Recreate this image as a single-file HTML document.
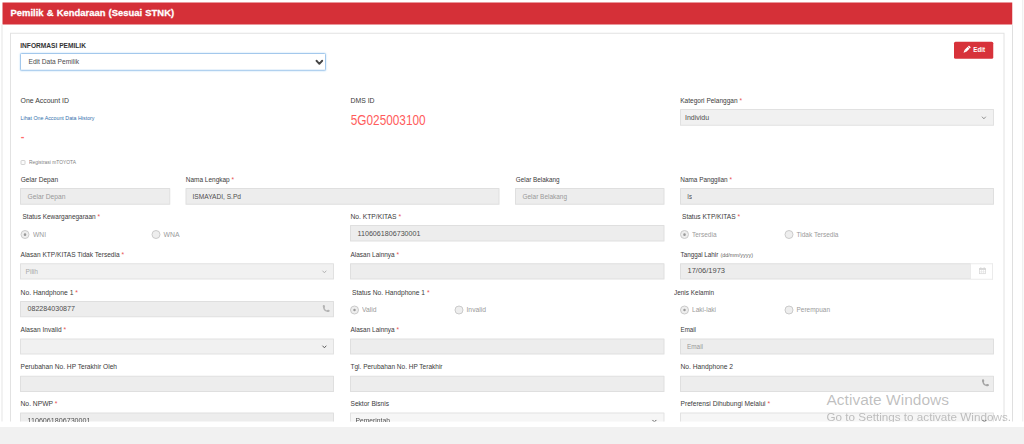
<!DOCTYPE html>
<html lang="id"><head><meta charset="utf-8"><title>Pemilik &amp; Kendaraan (Sesuai STNK)</title>
<style>
*{box-sizing:border-box;margin:0;padding:0}
html,body{width:1024px;height:444px;overflow:hidden;background:#fff}
body{position:relative;font-family:"Liberation Sans",sans-serif}
.root{position:absolute;left:0;top:0;width:4096px;height:1776px;transform:scale(0.25);transform-origin:0 0}

.clip{position:absolute;left:0;top:0;width:4096px;height:1686.4px;overflow:hidden;background:#fff}
.foot{position:absolute;left:0;top:1708px;width:4096px;height:68px;background:#f1f1f1}
.hdr{position:absolute;left:9.6px;top:9.6px;width:4039.2px;height:88.8px;background:#d53038}
.panel{position:absolute;left:5.6px;top:98.4px;width:4046.4px;height:1680px;border-left:4px solid #e6e6e6;border-right:4px solid #dfdfdf}
.card{position:absolute;left:40px;top:131.2px;width:3977.6px;height:1680px;border:4px solid #e2e2e2}
.vline{position:absolute;left:4088.8px;top:0;width:4px;height:1688px;background:#ececec}
.t{position:absolute;white-space:nowrap;transform-origin:0 50%;line-height:1}
.st{color:#e85050}
.in{position:absolute;height:67.2px;background:#ededed;border:4px solid #dfdfdf;border-radius:2px}
.in.lt{background:#f6f6f6;border-color:#e2e2e2}
.in.sl{background:#f1f1f1;border-color:#e1e1e1}
.sel{position:absolute;left:80px;top:212.4px;width:1224.4px;height:70.4px;background:#fff;border:4px solid #a3c8ec;border-radius:6px;box-shadow:0 0 6px rgba(102,175,233,.7)}
.addon{position:absolute;left:3883.2px;top:1052.8px;width:89.2px;height:66.4px;background:#fff;border:4px solid #ebebeb;border-left:0}
.btn{position:absolute;left:3816px;top:166.8px;width:156.8px;height:68.4px;background:#d7323a;border-radius:6px}
.rad{position:absolute;width:36px;height:36px;border-radius:50%;border:4px solid #cbcbcb;background:#eeeeee}
.rad.on::after{content:"";position:absolute;left:8.8px;top:8.8px;width:10.4px;height:10.4px;border-radius:50%;background:#9a9a9a}
.cb{position:absolute;left:81.6px;top:640.4px;width:20.4px;height:19.6px;border:4px solid #d2d2d2;border-radius:4px;background:#fbfbfb}
svg{position:absolute;overflow:visible}
</style></head><body><div class="root">
<div class="clip">
<div class="hdr"></div>
<div class="panel"></div>
<div class="card"></div>
<div class="vline"></div>

<div class="in sl" style="left:2720px;top:436.4px;width:1256px;height:66.4px"></div>
<div class="in " style="left:80px;top:752px;width:600.8px;height:66.8px"></div>
<div class="in " style="left:741.6px;top:752px;width:1256px;height:66.8px"></div>
<div class="in " style="left:2060px;top:752px;width:598.4px;height:66.8px"></div>
<div class="in " style="left:2720px;top:752px;width:1256px;height:66.8px"></div>
<div class="in " style="left:1400px;top:900px;width:1258.4px;height:66.4px"></div>
<div class="in sl" style="left:80px;top:1052.8px;width:1256px;height:65.2px"></div>
<div class="in " style="left:1400px;top:1052.8px;width:1258.4px;height:65.2px"></div>
<div class="in " style="left:2720px;top:1052.8px;width:1164.8px;height:65.2px"></div>
<div class="addon"></div>
<div class="in " style="left:80px;top:1204px;width:1256px;height:64.8px"></div>
<div class="in sl" style="left:80px;top:1353.6px;width:1256px;height:64.8px"></div>
<div class="in " style="left:1400px;top:1353.6px;width:1258.4px;height:64.8px"></div>
<div class="in " style="left:2720px;top:1353.6px;width:1256px;height:64.8px"></div>
<div class="in " style="left:80px;top:1503.2px;width:1256px;height:64.4px"></div>
<div class="in " style="left:1400px;top:1503.2px;width:1258.4px;height:64.4px"></div>
<div class="in " style="left:2720px;top:1503.2px;width:1256px;height:64.4px"></div>
<div class="in " style="left:80px;top:1649.6px;width:1256px;height:65.6px"></div>
<div class="in lt" style="left:1400px;top:1649.6px;width:1258.4px;height:65.6px"></div>
<div class="in lt" style="left:2720px;top:1649.6px;width:1256px;height:65.6px"></div>
<div class="sel"></div>
<div class="btn"></div>
<div class="cb"></div>
<div class="rad on" style="left:82px;top:920.4px"></div>
<div class="rad" style="left:606px;top:920.4px"></div>
<div class="rad on" style="left:2720px;top:920.4px"></div>
<div class="rad" style="left:3138px;top:920.4px"></div>
<div class="rad on" style="left:1400px;top:1222px"></div>
<div class="rad" style="left:1818px;top:1222px"></div>
<div class="rad on" style="left:2720px;top:1222px"></div>
<div class="rad" style="left:3138px;top:1222px"></div>
<svg style="left:1265.8px;top:243px;width:22.8px;height:12.4px" viewBox="0 0 5.7 3.1"><path d="M0 0 L2.85 3.1 L5.7 0" fill="none" stroke="#454545" stroke-width="1.85" stroke-linecap="round" stroke-linejoin="round"/></svg>
<svg style="left:3929px;top:467.6px;width:13.2px;height:7.2px" viewBox="0 0 3.3 1.8"><path d="M0 0 L1.65 1.8 L3.3 0" fill="none" stroke="#8a8a8a" stroke-width="0.95" stroke-linecap="round" stroke-linejoin="round"/></svg>
<svg style="left:1291.4px;top:1084.4px;width:13.2px;height:7.2px" viewBox="0 0 3.3 1.8"><path d="M0 0 L1.65 1.8 L3.3 0" fill="none" stroke="#b0b0b0" stroke-width="0.95" stroke-linecap="round" stroke-linejoin="round"/></svg>
<svg style="left:1291.4px;top:1384.4px;width:13.2px;height:7.2px" viewBox="0 0 3.3 1.8"><path d="M0 0 L1.65 1.8 L3.3 0" fill="none" stroke="#555" stroke-width="0.95" stroke-linecap="round" stroke-linejoin="round"/></svg>
<svg style="left:2611.4px;top:1681.2px;width:13.2px;height:7.2px" viewBox="0 0 3.3 1.8"><path d="M0 0 L1.65 1.8 L3.3 0" fill="none" stroke="#555" stroke-width="0.95" stroke-linecap="round" stroke-linejoin="round"/></svg>
<svg style="left:3931px;top:1681.2px;width:13.2px;height:7.2px" viewBox="0 0 3.3 1.8"><path d="M0 0 L1.65 1.8 L3.3 0" fill="none" stroke="#555" stroke-width="0.95" stroke-linecap="round" stroke-linejoin="round"/></svg>
<svg style="left:1287.4px;top:1217.8px;width:34px;height:34px" viewBox="0 0 8 8"><path d="M1.9 1.7 Q1.7 6.3 6.3 6.1" fill="none" stroke="#b4b4b4" stroke-width="1.35" stroke-linecap="round"/><ellipse cx="2" cy="1.9" rx="1.05" ry="1.35" fill="#b4b4b4" transform="rotate(-12 2 1.9)"/><ellipse cx="6.1" cy="6" rx="1.35" ry="1.05" fill="#b4b4b4" transform="rotate(-12 6.1 6)"/></svg>
<svg style="left:3924.2px;top:1515.4px;width:34px;height:34px" viewBox="0 0 8 8"><path d="M1.9 1.7 Q1.7 6.3 6.3 6.1" fill="none" stroke="#a4a4a4" stroke-width="1.35" stroke-linecap="round"/><ellipse cx="2" cy="1.9" rx="1.05" ry="1.35" fill="#a4a4a4" transform="rotate(-12 2 1.9)"/><ellipse cx="6.1" cy="6" rx="1.35" ry="1.05" fill="#a4a4a4" transform="rotate(-12 6.1 6)"/></svg>
<svg style="left:3915.6px;top:1069.2px;width:28px;height:27.2px" viewBox="0 0 7 6.8"><g fill="#d5d5d5"><rect x="0" y="1.1" width="7" height="1.5"/><rect x="1.3" y="0" width="1.1" height="1.8" rx=".4"/><rect x="4.6" y="0" width="1.1" height="1.8" rx=".4"/></g><rect x=".35" y="1.45" width="6.3" height="5" fill="none" stroke="#d5d5d5" stroke-width=".7"/><path d="M.4 4.5H6.6M2.5 2.6V6.4M4.5 2.6V6.4" fill="none" stroke="#dcdcdc" stroke-width=".5"/></svg>
<svg style="left:3849.2px;top:181px;width:35.2px;height:35.2px" viewBox="-4 -4 8 8"><g transform="rotate(45)" fill="#fff"><rect x="-1.2" y="-4.1" width="2.4" height="1.3" rx="0.35"/><rect x="-1.2" y="-2.5" width="2.4" height="4.1"/><path d="M-1.2 1.6 L1.2 1.6 L0 4 Z"/></g></svg>
<div class="t" id="t0" style="left:42.4px;top:32px;font-size:38.4px;height:38.4px;color:#fff;font-weight:700;-webkit-text-stroke:1.12px #fff;word-spacing:2.4px;transform:scaleX(0.9815)">Pemilik &amp; Kendaraan (Sesuai STNK)</div>
<div class="t" id="t1" style="left:81.2px;top:168.4px;font-size:28px;height:28px;color:#333;font-weight:700;transform:scaleX(0.9438)">INFORMASI PEMILIK</div>
<div class="t" id="t2" style="left:114px;top:234px;font-size:28px;height:28px;color:#4d4d4d;font-weight:400;transform:scaleX(0.9475)">Edit Data Pemilik</div>
<div class="t" id="t3" style="left:82px;top:388px;font-size:28px;height:28px;color:#3a3a3a;font-weight:400;transform:scaleX(0.9892)">One Account ID</div>
<div class="t" id="t4" style="left:82px;top:462px;font-size:21.6px;height:21.6px;color:#346fac;font-weight:400;transform:scaleX(0.9825)">Lihat One Account Data History</div>
<div class="t" id="t5" style="left:83.2px;top:524.8px;font-size:40px;height:40px;color:#ff6a6a;font-weight:700;transform:scaleX(1.0804)">-</div>
<div class="t" id="t6" style="left:116px;top:637.4px;font-size:20.4px;height:20.4px;color:#808080;font-weight:400;transform:scaleX(0.9628)">Registrasi mTOYOTA</div>
<div class="t" id="t7" style="left:1402px;top:388px;font-size:28px;height:28px;color:#3a3a3a;font-weight:400;transform:scaleX(0.9796)">DMS ID</div>
<div class="t" id="t8" style="left:1402.8px;top:452px;font-size:56px;height:56px;color:#ff5c5c;font-weight:400;transform:scaleX(0.8439)">5G025003100</div>
<div class="t" id="t9" style="left:2721.2px;top:388px;font-size:28px;height:28px;color:#3a3a3a;font-weight:400;transform:scaleX(0.9325)">Kategori Pelanggan<span class="st"> *</span></div>
<div class="t" id="t10" style="left:2740px;top:457.2px;font-size:28px;height:28px;color:#4d4d4d;font-weight:400;transform:scaleX(0.9947)">Individu</div>
<div class="t" id="t11" style="left:3893.2px;top:184px;font-size:29.6px;height:29.6px;color:#fff;font-weight:700;transform:scaleX(0.8371)">Edit</div>
<div class="t" id="t12" style="left:82.8px;top:706px;font-size:28px;height:28px;color:#3a3a3a;font-weight:400;transform:scaleX(0.9398)">Gelar Depan</div>
<div class="t" id="t13" style="left:742.8px;top:706px;font-size:28px;height:28px;color:#3a3a3a;font-weight:400;transform:scaleX(0.9262)">Nama Lengkap<span class="st"> *</span></div>
<div class="t" id="t14" style="left:2062.8px;top:706px;font-size:28px;height:28px;color:#3a3a3a;font-weight:400;transform:scaleX(0.9077)">Gelar Belakang</div>
<div class="t" id="t15" style="left:2721.2px;top:706px;font-size:28px;height:28px;color:#3a3a3a;font-weight:400;transform:scaleX(0.9162)">Nama Panggilan<span class="st"> *</span></div>
<div class="t" id="t16" style="left:110px;top:771.6px;font-size:28px;height:28px;color:#999;font-weight:400;transform:scaleX(0.9574)">Gelar Depan</div>
<div class="t" id="t17" style="left:770px;top:771.6px;font-size:28px;height:28px;color:#4d4d4d;font-weight:400;transform:scaleX(0.9421)">ISMAYADI, S.Pd</div>
<div class="t" id="t18" style="left:2090px;top:771.6px;font-size:28px;height:28px;color:#999;font-weight:400;transform:scaleX(0.9222)">Gelar Belakang</div>
<div class="t" id="t19" style="left:2749.2px;top:771.6px;font-size:28px;height:28px;color:#4d4d4d;font-weight:400;transform:scaleX(0.8631)">Is</div>
<div class="t" id="t20" style="left:90px;top:853.2px;font-size:28px;height:28px;color:#3a3a3a;font-weight:400;transform:scaleX(0.9262)">Status Kewarganegaraan<span class="st"> *</span></div>
<div class="t" id="t21" style="left:132px;top:924px;font-size:28px;height:28px;color:#9a9a9a;font-weight:400;transform:scaleX(0.9552)">WNI</div>
<div class="t" id="t22" style="left:654px;top:924px;font-size:28px;height:28px;color:#9a9a9a;font-weight:400;transform:scaleX(0.9797)">WNA</div>
<div class="t" id="t23" style="left:1402px;top:853.2px;font-size:28px;height:28px;color:#3a3a3a;font-weight:400;transform:scaleX(0.9568)">No. KTP/KITAS<span class="st"> *</span></div>
<div class="t" id="t24" style="left:1430px;top:920.4px;font-size:28px;height:28px;color:#4d4d4d;font-weight:400;transform:scaleX(1.0199)">1106061806730001</div>
<div class="t" id="t25" style="left:2728px;top:853.2px;font-size:28px;height:28px;color:#3a3a3a;font-weight:400;transform:scaleX(0.9396)">Status KTP/KITAS<span class="st"> *</span></div>
<div class="t" id="t26" style="left:2768px;top:924px;font-size:28px;height:28px;color:#9a9a9a;font-weight:400;transform:scaleX(0.9259)">Tersedia</div>
<div class="t" id="t27" style="left:3186px;top:924px;font-size:28px;height:28px;color:#9a9a9a;font-weight:400;transform:scaleX(0.9305)">Tidak Tersedia</div>
<div class="t" id="t28" style="left:82px;top:1004px;font-size:28px;height:28px;color:#3a3a3a;font-weight:400;transform:scaleX(0.9388)">Alasan KTP/KITAS Tidak Tersedia<span class="st"> *</span></div>
<div class="t" id="t29" style="left:102px;top:1073.2px;font-size:28px;height:28px;color:#a8a8a8;font-weight:400;transform:scaleX(0.9448)">Pilih</div>
<div class="t" id="t30" style="left:1402px;top:1004px;font-size:28px;height:28px;color:#3a3a3a;font-weight:400;transform:scaleX(0.9231)">Alasan Lainnya<span class="st"> *</span></div>
<div class="t" id="t31" style="left:2722px;top:1004px;font-size:28px;height:28px;color:#3a3a3a;font-weight:400;transform:scaleX(0.8993)">Tanggal Lahir</div>
<div class="t" id="t32" style="left:2882px;top:1011.6px;font-size:18.4px;height:18.4px;color:#666;font-weight:400;transform:scaleX(1.1780)">(dd/mm/yyyy)</div>
<div class="t" id="t33" style="left:2750px;top:1070px;font-size:28px;height:28px;color:#4d4d4d;font-weight:400;transform:scaleX(1.0704)">17/06/1973</div>
<div class="t" id="t34" style="left:82px;top:1156px;font-size:28px;height:28px;color:#3a3a3a;font-weight:400;transform:scaleX(0.9656)">No. Handphone 1<span class="st"> *</span></div>
<div class="t" id="t35" style="left:110px;top:1221.2px;font-size:28px;height:28px;color:#4d4d4d;font-weight:400;transform:scaleX(1.0167)">082284030877</div>
<div class="t" id="t36" style="left:1408px;top:1156px;font-size:28px;height:28px;color:#3a3a3a;font-weight:400;transform:scaleX(0.9528)">Status No. Handphone 1<span class="st"> *</span></div>
<div class="t" id="t37" style="left:1448px;top:1225.2px;font-size:28px;height:28px;color:#9a9a9a;font-weight:400;transform:scaleX(0.9637)">Valid</div>
<div class="t" id="t38" style="left:1866px;top:1225.2px;font-size:28px;height:28px;color:#9a9a9a;font-weight:400;transform:scaleX(0.9637)">Invalid</div>
<div class="t" id="t39" style="left:2696px;top:1156px;font-size:28px;height:28px;color:#3a3a3a;font-weight:400;transform:scaleX(0.9179)">Jenis Kelamin</div>
<div class="t" id="t40" style="left:2768px;top:1225.2px;font-size:28px;height:28px;color:#9a9a9a;font-weight:400;transform:scaleX(0.9347)">Laki-laki</div>
<div class="t" id="t41" style="left:3186px;top:1225.2px;font-size:28px;height:28px;color:#9a9a9a;font-weight:400;transform:scaleX(0.9256)">Perempuan</div>
<div class="t" id="t42" style="left:82px;top:1306px;font-size:28px;height:28px;color:#3a3a3a;font-weight:400;transform:scaleX(0.9429)">Alasan Invalid<span class="st"> *</span></div>
<div class="t" id="t43" style="left:1402px;top:1306px;font-size:28px;height:28px;color:#3a3a3a;font-weight:400;transform:scaleX(0.9231)">Alasan Lainnya<span class="st"> *</span></div>
<div class="t" id="t44" style="left:2722px;top:1306px;font-size:28px;height:28px;color:#3a3a3a;font-weight:400;transform:scaleX(0.8855)">Email</div>
<div class="t" id="t45" style="left:2748px;top:1371.2px;font-size:28px;height:28px;color:#999;font-weight:400;transform:scaleX(0.9141)">Email</div>
<div class="t" id="t46" style="left:82px;top:1453.2px;font-size:28px;height:28px;color:#3a3a3a;font-weight:400;transform:scaleX(0.9454)">Perubahan No. HP Terakhir Oleh</div>
<div class="t" id="t47" style="left:1402px;top:1453.2px;font-size:28px;height:28px;color:#3a3a3a;font-weight:400;transform:scaleX(0.9297)">Tgl. Perubahan No. HP Terakhir</div>
<div class="t" id="t48" style="left:2722px;top:1453.2px;font-size:28px;height:28px;color:#3a3a3a;font-weight:400;transform:scaleX(0.9567)">No. Handphone 2</div>
<div class="t" id="t49" style="left:82px;top:1602px;font-size:28px;height:28px;color:#3a3a3a;font-weight:400;transform:scaleX(0.9639)">No. NPWP<span class="st"> *</span></div>
<div class="t" id="t50" style="left:110px;top:1668.4px;font-size:28px;height:28px;color:#4d4d4d;font-weight:400;transform:scaleX(1.0199)">1106061806730001</div>
<div class="t" id="t51" style="left:1402px;top:1602px;font-size:28px;height:28px;color:#3a3a3a;font-weight:400;transform:scaleX(0.9424)">Sektor Bisnis</div>
<div class="t" id="t52" style="left:1422px;top:1668.4px;font-size:28px;height:28px;color:#4d4d4d;font-weight:400;transform:scaleX(0.9638)">Pemerintah</div>
<div class="t" id="t53" style="left:2722px;top:1602px;font-size:28px;height:28px;color:#3a3a3a;font-weight:400;transform:scaleX(0.9504)">Preferensi Dihubungi Melalui<span class="st"> *</span></div>
<div class="t" id="t54" style="left:3306px;top:1567px;font-size:62px;height:62px;color:rgba(120,120,120,.47);font-weight:400;transform:scaleX(1.0015)">Activate Windows</div>
<div class="t" id="t55" style="left:3306px;top:1643.2px;font-size:46.4px;height:46.4px;color:rgba(120,120,120,.45);font-weight:400;transform:scaleX(1.0078)">Go to Settings to activate Windows.</div>
</div>
<div class="foot"></div>
</div></body></html>
